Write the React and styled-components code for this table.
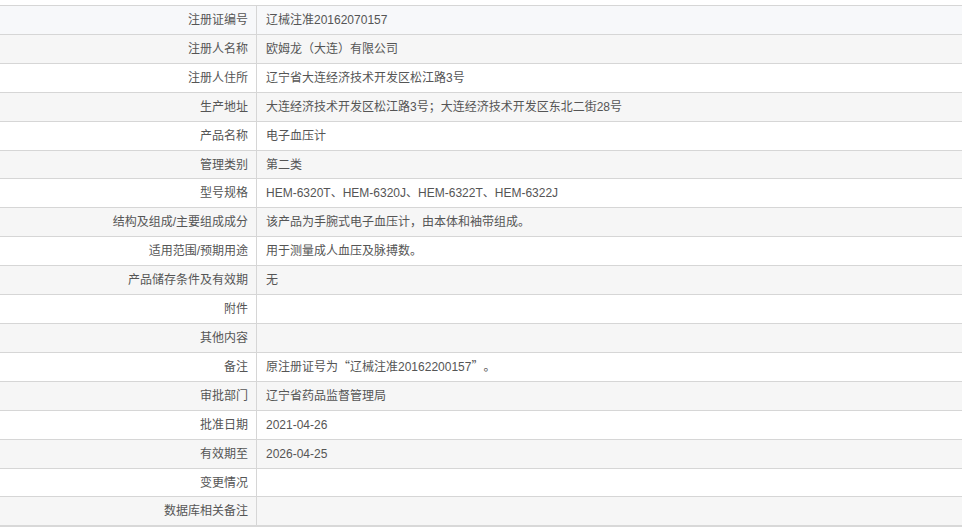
import styled, { createGlobalStyle } from "styled-components";

const GlobalStyle = createGlobalStyle`
  html, body {
    margin: 0;
    padding: 0;
    background: #ffffff;
  }
  body {
    font-family: "Liberation Sans", "Noto Sans CJK SC", sans-serif;
  }
`;

const rows = [
  ["注册证编号", "辽械注准20162070157"],
  ["注册人名称", "欧姆龙（大连）有限公司"],
  ["注册人住所", "辽宁省大连经济技术开发区松江路3号"],
  ["生产地址", "大连经济技术开发区松江路3号；大连经济技术开发区东北二街28号"],
  ["产品名称", "电子血压计"],
  ["管理类别", "第二类"],
  ["型号规格", "HEM-6320T、HEM-6320J、HEM-6322T、HEM-6322J"],
  ["结构及组成/主要组成成分", "该产品为手腕式电子血压计，由本体和袖带组成。"],
  ["适用范围/预期用途", "用于测量成人血压及脉搏数。"],
  ["产品储存条件及有效期", "无"],
  ["附件", ""],
  ["其他内容", ""],
  ["备注", "quote"],
  ["审批部门", "辽宁省药品监督管理局"],
  ["批准日期", "2021-04-26"],
  ["有效期至", "2026-04-25"],
  ["变更情况", ""],
  ["数据库相关备注", ""],
];

function renderValue(value) {
  if (value !== "quote") return value;
  return (
    <>
      原注册证号为<Wide>“</Wide>辽械注准20162200157<Wide>”</Wide>。
    </>
  );
}

export default function App() {
  return (
    <>
      <GlobalStyle />
      <Page>
        <Table>
          <tbody>
            {rows.map(([label, value], index) => (
              <Row key={label} tone={index === 0 ? "hover" : index % 2 ? "grey" : "white"}>
                <Label>{label}</Label>
                <Value>{renderValue(value)}</Value>
              </Row>
            ))}
          </tbody>
        </Table>
      </Page>
    </>
  );
}

const Page = styled.div`
  padding-top: 5px;
  width: 962px;
`;

const Table = styled.table`
  width: 100%;
  border-collapse: collapse;
  border-spacing: 0;
  border-bottom: 2px solid #d8d8d8;
  table-layout: fixed;
`;

const Row = styled.tr`
  background: ${(p) =>
    p.tone === "hover" ? "#f7f8fa" : p.tone === "grey" ? "#f6f6f6" : "#ffffff"};
  border-top: 1px solid #d6d6d6;
`;

const Label = styled.td`
  width: 248px;
  height: 26.9px;
  padding: 1px 8px 0 0;
  text-align: right;
  font-size: 12px;
  color: #555555;
  border-right: 1px solid #d6d6d6;
  white-space: nowrap;
  line-height: 26.9px;
`;

const Value = styled.td`
  height: 26.9px;
  padding: 1px 0 0 9px;
  text-align: left;
  font-size: 12px;
  color: #555555;
  line-height: 26.9px;
  white-space: nowrap;
`;

const Wide = styled.span`
  font-family: "Noto Sans CJK SC", sans-serif;
  display: inline-block;
  width: 12px;
  line-height: 1;
  text-align: center;
`;
